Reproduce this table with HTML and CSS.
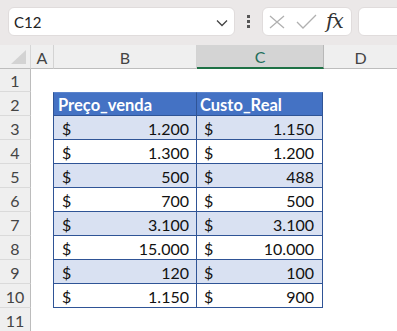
FILE: index.html
```html
<!DOCTYPE html>
<html lang="pt">
<head>
<meta charset="utf-8">
<link rel="stylesheet" href="styles.css">
</head>
<body>
<div class="app">
  <div class="toolbar">
    <div class="namebox">
      <span class="ref">C12</span>
      <svg class="chev" width="12" height="8" viewBox="0 0 12 8"><path d="M1 1.5 L6 6.5 L11 1.5" fill="none" stroke="#444" stroke-width="1.3"/></svg>
    </div>
    <div class="dots"><i></i><i></i><i></i></div>
    <div class="fxbox">
      <svg class="ico" width="16" height="14" viewBox="0 0 16 14"><path d="M1 1 L15 13 M15 1 L1 13" fill="none" stroke="#b0b0b0" stroke-width="1.3"/></svg>
      <svg class="ico" width="21" height="15" viewBox="0 0 21 15"><path d="M1 8 L7 14 L20 1" fill="none" stroke="#b0b0b0" stroke-width="1.3"/></svg>
      <span class="fx">fx</span>
    </div>
    <div class="input"></div>
  </div>

  <div class="colheads">
    <div class="corner"><span class="tri"></span></div>
    <div class="ch ca">A</div>
    <div class="ch cb">B</div>
    <div class="ch cc sel">C</div>
    <div class="ch cd">D</div>
  </div>

  <div class="sheet">
    <div class="row first"><div class="rh">1</div></div>
    <div class="row"><div class="rh">2</div><div class="ca-sp"></div>
      <div class="cell b head">Preço_venda</div><div class="cell c head">Custo_Real</div></div>
    <div class="row band"><div class="rh">3</div><div class="ca-sp"></div>
      <div class="cell b"><span>$</span><span>1.200</span></div><div class="cell c"><span>$</span><span>1.150</span></div></div>
    <div class="row"><div class="rh">4</div><div class="ca-sp"></div>
      <div class="cell b"><span>$</span><span>1.300</span></div><div class="cell c"><span>$</span><span>1.200</span></div></div>
    <div class="row band"><div class="rh">5</div><div class="ca-sp"></div>
      <div class="cell b"><span>$</span><span>500</span></div><div class="cell c"><span>$</span><span>488</span></div></div>
    <div class="row"><div class="rh">6</div><div class="ca-sp"></div>
      <div class="cell b"><span>$</span><span>700</span></div><div class="cell c"><span>$</span><span>500</span></div></div>
    <div class="row band"><div class="rh">7</div><div class="ca-sp"></div>
      <div class="cell b"><span>$</span><span>3.100</span></div><div class="cell c"><span>$</span><span>3.100</span></div></div>
    <div class="row"><div class="rh">8</div><div class="ca-sp"></div>
      <div class="cell b"><span>$</span><span>15.000</span></div><div class="cell c"><span>$</span><span>10.000</span></div></div>
    <div class="row band"><div class="rh">9</div><div class="ca-sp"></div>
      <div class="cell b"><span>$</span><span>120</span></div><div class="cell c"><span>$</span><span>100</span></div></div>
    <div class="row"><div class="rh">10</div><div class="ca-sp"></div>
      <div class="cell b"><span>$</span><span>1.150</span></div><div class="cell c"><span>$</span><span>900</span></div></div>
    <div class="row"><div class="rh">11</div></div>
  </div>
</div>
</body>
</html>
```

FILE: styles.css
```css
* { box-sizing: border-box; }
html, body { margin: 0; padding: 0; }
body {
  width: 397px;
  height: 331px;
  overflow: hidden;
  background: #ffffff;
  font-family: "Lato", "Liberation Sans", sans-serif;
}
.app { width: 397px; height: 331px; overflow: hidden; }

.toolbar {
  height: 45px;
  background: #ebe8e8;
  display: flex;
  align-items: flex-start;
  padding: 7px 0 0 8px;
  overflow: hidden;
}
.namebox {
  width: 227px;
  height: 29px;
  background: #fff;
  border: 1px solid #e0dcdc;
  border-radius: 6px;
  display: flex;
  align-items: center;
  justify-content: space-between;
  padding: 0 6px 0 5px;
  flex: none;
}
.ref { font-size: 15px; color: #222; }
.chev { margin-top: 2px; }
.dots {
  width: 27px;
  height: 29px;
  display: flex;
  flex-direction: column;
  align-items: center;
  justify-content: center;
  gap: 2px;
  flex: none;
}
.dots i { display: block; width: 3px; height: 3px; background: #555; }
.fxbox {
  width: 90px;
  height: 29px;
  background: #fff;
  border: 1px solid #e0dcdc;
  border-radius: 6px;
  display: flex;
  align-items: center;
  padding: 0 0 0 6px;
  gap: 12px;
  flex: none;
}
.fxbox .ico:nth-child(2) { margin-left: -1px; }
.fx {
  font-family: "DejaVu Serif", "Liberation Serif", serif;
  font-style: italic;
  font-size: 20px;
  color: #333;
  margin-left: -3px;
  letter-spacing: -1px;
  margin-top: -2px;
}
.input {
  flex: none;
  width: 60px;
  height: 29px;
  margin-left: 6px;
  background: #fff;
  border: 1px solid #e0dcdc;
  border-radius: 6px;
}

.colheads {
  display: flex;
  height: 24px;
  background: #efefef;
}
.corner {
  width: 31px;
  height: 24px;
  border-right: 1px solid #d6d6d6;
  border-bottom: 1px solid #bdbdbd;
  position: relative;
  flex: none;
}
.tri {
  position: absolute;
  right: 4px;
  bottom: 4px;
  width: 0;
  height: 0;
  border-left: 15px solid transparent;
  border-bottom: 14px solid #d3d3d3;
}
.ch {
  height: 24px;
  border-right: 1px solid #d3d3d3;
  border-bottom: 1px solid #bdbdbd;
  display: flex;
  align-items: center;
  justify-content: center;
  font-size: 16px;
  color: #444;
  flex: none;
  padding-top: 1px;
}
.ca { width: 23px; }
.cb { width: 143px; }
.cc { width: 127px; }
.cd { flex: 1; border-right: none; }
.sel {
  background: #d4d4d4;
  border-bottom: 2px solid #1e7145;
  color: #1e6e5a;
  border-right-color: #b8b8b8;
}

.sheet { display: flex; flex-direction: column; }
.row { display: flex; height: 24px; }
.row.first { height: 23px; }
.rh {
  width: 31px;
  flex: none;
  background: #efefef;
  border-right: 1px solid #bcbcbc;
  border-bottom: 1px solid #dadada;
  display: flex;
  align-items: center;
  justify-content: center;
  font-size: 16px;
  color: #444;
  padding-top: 1px;
}
.ca-sp { width: 22px; flex: none; }
.cell {
  flex: none;
  height: 24px;
  border-right: 1px solid #2f5496;
  border-bottom: 1px solid #2f5496;
  display: flex;
  align-items: center;
  justify-content: space-between;
  font-size: 16px;
  color: #111;
  padding-top: 1px;
}
.cell.b { width: 144px; border-left: 1px solid #2f5496; padding-left: 8px; padding-right: 7px; }
.cell.c { width: 126px; padding-left: 7px; padding-right: 8px; }
.band .cell { background: #d9e1f2; }
.cell.head {
  background: #4472c4;
  color: #fff;
  font-weight: 700;
  font-size: 16.5px;
  justify-content: flex-start;
  border-top: 1px solid #5b84cc;
}
.cell.b.head { padding-left: 4px; }
.cell.c.head { padding-left: 3px; }
```
